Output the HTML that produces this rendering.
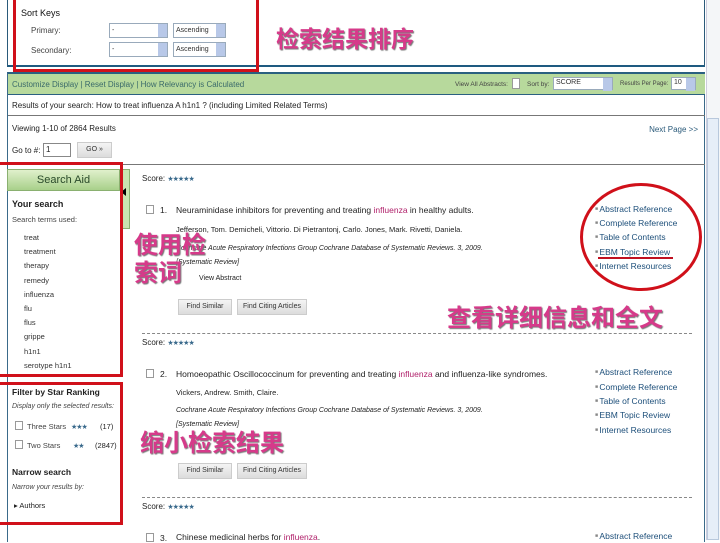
<!DOCTYPE html>
<html><head><meta charset="utf-8"><style>
*{margin:0;padding:0;box-sizing:border-box}
body{width:720px;height:540px;overflow:hidden;background:#fff;font-family:"Liberation Sans",sans-serif;font-size:8px;color:#222;position:relative}
.a{position:absolute;white-space:nowrap}
.sel{position:absolute;height:15px;border:1px solid #9ab;background:#fff;font-size:7px;padding:3px 2px;color:#333}
.sel:after{content:"";position:absolute;right:0;top:0;width:9px;height:13px;background:#b8c8e8}
.cn{position:absolute;white-space:nowrap;font-family:"Liberation Sans","Noto Sans CJK SC",sans-serif;font-weight:bold;color:#d63a8a;text-shadow:1px 1px 1px #777}
.red{position:absolute;border:3px solid #d0101a}
.btn{position:absolute;height:16px;background:linear-gradient(#f4f4f4,#dcdcdc);border:1px solid #ccc;font-size:7px;text-align:center;line-height:14px;color:#333}
.lk{position:absolute;color:#1d4f7a;font-size:8.5px;white-space:nowrap}
.lk:before{content:"■  ";font-size:5px;color:#888;vertical-align:2px}
.star{color:#3a6a8c;font-size:7px;letter-spacing:-1px}
.it{font-style:italic}
.pk{color:#b0206a}
</style></head><body>
<div class="a" style="left:7px;top:0;width:698px;height:67px;border-left:1px solid #2a5a7a;border-right:1px solid #2a5a7a;border-bottom:2px solid #1e5a80"></div>
<div class="a" style="left:7px;top:72px;width:698px;height:470px;border-left:1px solid #3a6a8a;border-right:1px solid #3a6a8a;border-top:2px solid #2a6080"></div>
<div class="a" style="left:706px;top:0;width:14px;height:540px;background:#f4f6f8;border-left:1px solid #ccd"></div>
<div class="a" style="left:707px;top:118px;width:12px;height:422px;background:#e6eef8;border:1px solid #b8c8dc"></div>

<div class="a" style="left:21px;top:8px;font-size:9px;color:#111">Sort Keys</div>
<div class="a" style="left:31px;top:26px;color:#444">Primary:</div>
<div class="a" style="left:31px;top:46px;color:#444">Secondary:</div>
<div class="sel" style="left:109px;top:23px;width:59px">-</div>
<div class="sel" style="left:173px;top:23px;width:53px">Ascending</div>
<div class="sel" style="left:109px;top:42px;width:59px">-</div>
<div class="sel" style="left:173px;top:42px;width:53px">Ascending</div>
<div class="red" style="left:13px;top:-3px;width:246px;height:75px"></div>
<div class="cn" style="left:276px;top:20px;font-size:23px">检索结果排序</div>

<div class="a" style="left:8px;top:74px;width:697px;height:21px;background:#b7d99c;border-bottom:1px solid #2a6080"></div>
<div class="a" style="left:12px;top:80px;color:#3a6a6a">Customize Display | Reset Display | How Relevancy is Calculated</div>
<div class="a" style="left:455px;top:81px;font-size:6.5px;color:#444">View All Abstracts:</div>
<div class="a" style="left:512px;top:78px;width:8px;height:11px;border:1px solid #999;background:#fff"></div>
<div class="a" style="left:527px;top:81px;font-size:6.5px;color:#444">Sort by:</div>
<div class="sel" style="left:553px;top:77px;width:60px;height:13px;padding:1px 2px">SCORE</div>
<div class="a" style="left:620px;top:81px;font-size:6px;color:#444">Results Per Page:</div>
<div class="sel" style="left:671px;top:77px;width:25px;height:13px;padding:1px 2px">10</div>

<div class="a" style="left:12px;top:101px">Results of your search: How to treat influenza A h1n1 ? (including Limited Related Terms)</div>
<div class="a" style="left:8px;top:115px;width:697px;border-top:1px solid #777"></div>
<div class="a" style="left:12px;top:124px">Viewing 1-10 of 2864 Results</div>
<div class="a" style="right:22px;top:125px;color:#2a5a7a;font-size:8px">Next Page &gt;&gt;</div>
<div class="a" style="left:12px;top:146px">Go to #:</div>
<div class="a" style="left:43px;top:143px;width:28px;height:14px;border:1px solid #888;font-size:8px;padding:1px 2px">1</div>
<div class="btn" style="left:77px;top:142px;width:35px">GO »</div>
<div class="a" style="left:8px;top:164px;width:697px;border-top:1px solid #777"></div>

<div class="a" style="left:7px;top:169px;width:113px;height:22px;background:linear-gradient(#e0f0cc,#a8d08a);border:1px solid #8ab070;font-size:11px;text-align:center;line-height:20px;color:#2a4a2a">Search Aid</div>
<div class="a" style="left:120px;top:169px;width:10px;height:60px;background:#c8e4b0;border:1px solid #8ab070"></div>
<div class="a" style="left:121px;top:188px;width:0;height:0;border:4px solid transparent;border-right:5px solid #000;border-left:0"></div>
<div class="a" style="left:12px;top:199px;font-size:9px;font-weight:bold">Your search</div>
<div class="a" style="left:12px;top:215px;font-size:7.5px;color:#444">Search terms used:</div>
<div class="a" style="left:24px;top:231px;font-size:7.5px;line-height:14.2px;color:#333">treat<br>treatment<br>therapy<br>remedy<br>influenza<br>flu<br>flus<br>grippe<br>h1n1<br>serotype h1n1</div>
<div class="red" style="left:-3px;top:162px;width:126px;height:215px"></div>
<div class="a" style="left:12px;top:387px;font-size:8.5px;font-weight:bold">Filter by Star Ranking</div>
<div class="a it" style="left:12px;top:403px;font-size:7px;color:#444">Display only the selected results:</div>
<div class="a" style="left:15px;top:421px;width:8px;height:9px;border:1px solid #999"></div>
<div class="a" style="left:27px;top:422px;font-size:7.5px;color:#444">Three Stars</div>
<div class="a star" style="left:71px;top:423px">★★★</div><div class="a" style="left:100px;top:422px;font-size:7.5px">(17)</div>
<div class="a" style="left:15px;top:440px;width:8px;height:9px;border:1px solid #999"></div>
<div class="a" style="left:27px;top:441px;font-size:7.5px;color:#444">Two Stars</div>
<div class="a star" style="left:73px;top:442px">★★</div><div class="a" style="left:95px;top:441px;font-size:7.5px">(2847)</div>
<div class="a" style="left:12px;top:467px;font-size:8.5px;font-weight:bold">Narrow search</div>
<div class="a it" style="left:12px;top:484px;font-size:7px;color:#444">Narrow your results by:</div>
<div class="a" style="left:14px;top:501px;font-size:7.5px">▸ Authors</div>
<div class="red" style="left:-3px;top:382px;width:126px;height:143px"></div>

<div class="a" style="left:142px;top:174px">Score: <span class="star">★★★★★</span></div>
<div class="a" style="left:146px;top:205px;width:8px;height:9px;border:1px solid #999"></div>
<div class="a" style="left:160px;top:205px;font-size:8.5px">1.</div>
<div class="a" style="left:176px;top:205px;font-size:8.5px">Neuraminidase inhibitors for preventing and treating <span class="pk">influenza</span> in healthy adults.</div>
<div class="a" style="left:176px;top:225px;font-size:7.5px">Jefferson, Tom. Demicheli, Vittorio. Di Pietrantonj, Carlo. Jones, Mark. Rivetti, Daniela.</div>
<div class="a it" style="left:176px;top:245px;font-size:7px">Cochrane Acute Respiratory Infections Group Cochrane Database of Systematic Reviews. 3, 2009.</div>
<div class="a it" style="left:176px;top:259px;font-size:7px">[Systematic Review]</div>
<div class="a" style="left:199px;top:275px;font-size:7px">View Abstract</div>
<div class="btn" style="left:178px;top:299px;width:54px">Find Similar</div>
<div class="btn" style="left:237px;top:299px;width:70px">Find Citing Articles</div>
<div class="a" style="left:142px;top:333px;width:550px;border-top:1px dashed #888"></div>

<div class="a" style="left:142px;top:338px">Score: <span class="star">★★★★★</span></div>
<div class="a" style="left:146px;top:369px;width:8px;height:9px;border:1px solid #999"></div>
<div class="a" style="left:160px;top:369px;font-size:8.5px">2.</div>
<div class="a" style="left:176px;top:369px;font-size:8.5px">Homoeopathic Oscillococcinum for preventing and treating <span class="pk">influenza</span> and influenza-like syndromes.</div>
<div class="a" style="left:176px;top:388px;font-size:7.5px">Vickers, Andrew. Smith, Claire.</div>
<div class="a it" style="left:176px;top:407px;font-size:7px">Cochrane Acute Respiratory Infections Group Cochrane Database of Systematic Reviews. 3, 2009.</div>
<div class="a it" style="left:176px;top:421px;font-size:7px">[Systematic Review]</div>
<div class="btn" style="left:178px;top:463px;width:54px">Find Similar</div>
<div class="btn" style="left:237px;top:463px;width:70px">Find Citing Articles</div>
<div class="a" style="left:142px;top:497px;width:550px;border-top:1px dashed #888"></div>
<div class="a" style="left:142px;top:502px">Score: <span class="star">★★★★★</span></div>
<div class="a" style="left:146px;top:533px;width:8px;height:9px;border:1px solid #999"></div>
<div class="a" style="left:160px;top:533px;font-size:8.5px">3.</div>
<div class="a" style="left:176px;top:532px;font-size:8.5px">Chinese medicinal herbs for <span class="pk">influenza</span>.</div>

<div class="lk" style="left:595px;top:204px">Abstract Reference</div>
<div class="lk" style="left:595px;top:218px">Complete Reference</div>
<div class="lk" style="left:595px;top:232px">Table of Contents</div>
<div class="lk" style="left:595px;top:247px">EBM Topic Review</div>
<div class="lk" style="left:595px;top:261px">Internet Resources</div>
<div class="a" style="left:598px;top:257px;width:75px;border-top:2px solid #c01020"></div>
<div class="a" style="left:580px;top:183px;width:122px;height:108px;border:3px solid #d0101a;border-radius:50%"></div>
<div class="lk" style="left:595px;top:367px">Abstract Reference</div>
<div class="lk" style="left:595px;top:382px">Complete Reference</div>
<div class="lk" style="left:595px;top:396px">Table of Contents</div>
<div class="lk" style="left:595px;top:410px">EBM Topic Review</div>
<div class="lk" style="left:595px;top:425px">Internet Resources</div>
<div class="lk" style="left:595px;top:531px">Abstract Reference</div>

<div class="cn" style="left:134px;top:232px;font-size:24px;line-height:28px">使用检<br>索词</div>
<div class="cn" style="left:447px;top:298px;font-size:24px">查看详细信息和全文</div>
<div class="cn" style="left:140px;top:423px;font-size:24px">缩小检索结果</div>
</body></html>
